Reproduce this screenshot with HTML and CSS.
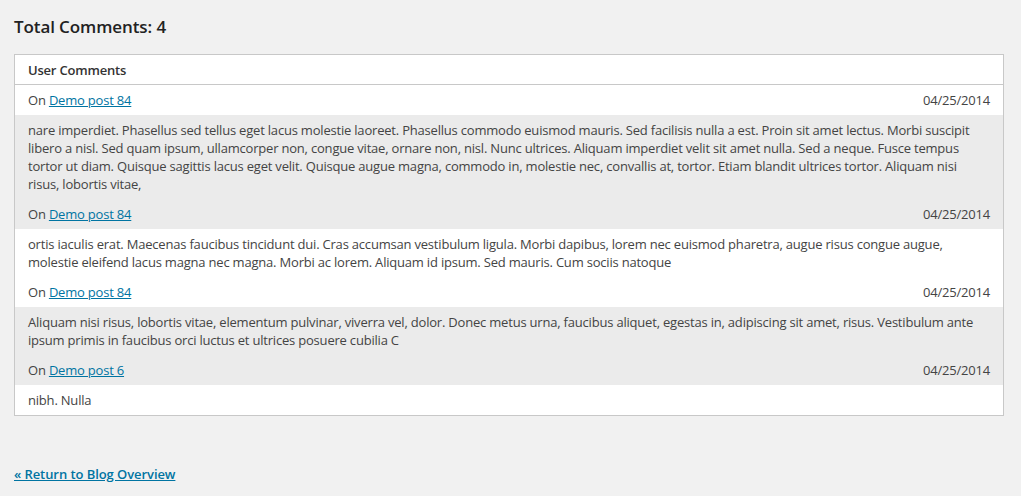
FILE: index.html
```html
<!DOCTYPE html>
<html>
<head>
<meta charset="utf-8">
<link rel="stylesheet" href="styles.css">
</head>
<body>
<div class="wrap">
  <h2 class="total">Total Comments: 4</h2>
  <table class="comments">
    <thead>
      <tr><th colspan="2">User Comments</th></tr>
    </thead>
    <tbody>
      <tr class="meta light"><td>On <a href="#">Demo post 84</a></td><td class="date">04/25/2014</td></tr>
      <tr class="body shade"><td colspan="2">nare imperdiet. Phasellus sed tellus eget lacus molestie laoreet. Phasellus commodo euismod mauris. Sed facilisis nulla a est. Proin sit amet lectus. Morbi suscipit libero a nisl. Sed quam ipsum, ullamcorper non, congue vitae, ornare non, nisl. Nunc ultrices. Aliquam imperdiet velit sit amet nulla. Sed a neque. Fusce tempus tortor ut diam. Quisque sagittis lacus eget velit. Quisque augue magna, commodo in, molestie nec, convallis at, tortor. Etiam blandit ultrices tortor. Aliquam nisi risus, lobortis vitae,</td></tr>
      <tr class="meta shade"><td>On <a href="#">Demo post 84</a></td><td class="date">04/25/2014</td></tr>
      <tr class="body light"><td colspan="2">ortis iaculis erat. Maecenas faucibus tincidunt dui. Cras accumsan vestibulum ligula. Morbi dapibus, lorem nec euismod pharetra, augue risus congue augue, molestie eleifend lacus magna nec magna. Morbi ac lorem. Aliquam id ipsum. Sed mauris. Cum sociis natoque</td></tr>
      <tr class="meta light"><td>On <a href="#">Demo post 84</a></td><td class="date">04/25/2014</td></tr>
      <tr class="body shade"><td colspan="2">Aliquam nisi risus, lobortis vitae, elementum pulvinar, viverra vel, dolor. Donec metus urna, faucibus aliquet, egestas in, adipiscing sit amet, risus. Vestibulum ante ipsum primis in faucibus orci luctus et ultrices posuere cubilia C</td></tr>
      <tr class="meta shade"><td>On <a href="#">Demo post 6</a></td><td class="date">04/25/2014</td></tr>
      <tr class="body light"><td colspan="2">nibh. Nulla</td></tr>
    </tbody>
  </table>
  <p class="back"><a href="#">« Return to Blog Overview</a></p>
</div>
</body>
</html>
```
FILE: styles.css
```css
html, body {
  margin: 0;
  padding: 0;
  background: #f1f1f1;
}
body {
  font-family: "Open Sans", "Liberation Sans", sans-serif;
  font-size: 13px;
  letter-spacing: -0.2px;
  color: #444;
}
.wrap {
  padding: 14px 17px 0 14px;
}
.total {
  margin: 0 0 15px;
  font-size: 17px;
  font-weight: 600;
  line-height: 25px;
  letter-spacing: -0.1px;
  color: #222;
}
.comments {
  width: 100%;
  border-collapse: collapse;
  border: 1px solid #c8c8c8;
  background: #fff;
}
.comments th {
  text-align: left;
  font-weight: 600;
  color: #333;
  line-height: 18px;
  padding: 6px 13px 5px;
  border-bottom: 1px solid #c8c8c8;
}
.comments td {
  line-height: 18px;
  padding: 6px 13px;
  vertical-align: top;
}
.comments .date {
  text-align: right;
  white-space: nowrap;
}
.light {
  background: #fff;
}
.shade {
  background: #ebebeb;
}
a {
  color: #0074a2;
}
.back {
  margin: 49px 0 0;
  font-weight: 600;
  line-height: 19px;
  letter-spacing: -0.07px;
}
```
